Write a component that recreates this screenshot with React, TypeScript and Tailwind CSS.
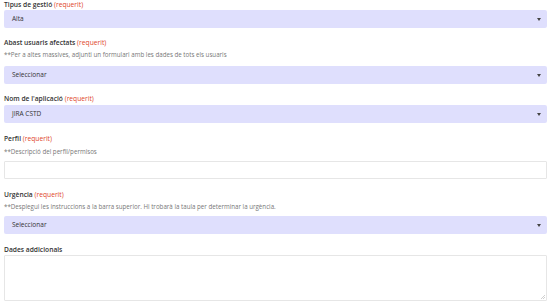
import React from "react";

const Req = () => <span className="font-normal text-[#e0451f]"> (requerit)</span>;

const Label = ({ children, req = true, className = "" }: { children: React.ReactNode; req?: boolean; className?: string }) => (
  <div className={`text-[6.7px] leading-[9px] font-semibold text-[#333] ${className}`}>
    {children}
    {req && <Req />}
  </div>
);

const Help = ({ children, className = "" }: { children: React.ReactNode; className?: string }) => (
  <div className={`text-[6.2px] leading-[8px] text-[#777] ${className}`}>{children}</div>
);

const Select = ({ value, className = "" }: { value: string; className?: string }) => (
  <div className={`h-[18px] rounded-[2px] bg-[#dfdffd] flex items-center justify-between pl-[8px] pr-[6px] ${className}`}>
    <span className="text-[6.5px] text-[#333]">{value}</span>
    <svg width="4" height="3" viewBox="0 0 4 3"><path d="M0 0 L4 0 L2 3 Z" fill="#444" /></svg>
  </div>
);

export default function App() {
  return (
    <div className="w-[551px] h-[305px] bg-white px-[4px] pt-[0px] overflow-hidden" style={{ fontFamily: '"Open Sans", sans-serif' }}>
      <Label>Tipus de gestió</Label>
      <Select value="Alta" className="mt-[1px]" />

      <Label className="mt-[10px]">Abast usuaris afectats</Label>
      <Help className="mt-[4px]">**Per a altes massives, adjunti un formulari amb les dades de tots els usuaris</Help>
      <Select value="Seleccionar" className="mt-[7px]" />

      <Label className="mt-[10px]">Nom de l'aplicació</Label>
      <Select value="JIRA CSTD" className="mt-[2px]" />

      <Label className="mt-[11px]">Perfil</Label>
      <Help className="mt-[5px]">**Descripció del perfil/permisos</Help>
      <div className="mt-[5px] h-[18px] border border-[#e6e6e6] rounded-[1px] bg-white" />

      <Label className="mt-[11px]">Urgència</Label>
      <Help className="mt-[4px]">**Desplegui les instruccions a la barra superior. Hi trobarà la taula per determinar la urgència.</Help>
      <Select value="Seleccionar" className="mt-[5px]" />

      <Label req={false} className="mt-[11px]">Dades addicionals</Label>
      <div className="relative mt-[1px] h-[46px] border border-[#e6e6e6] rounded-[1px] bg-white">
        <svg className="absolute right-[1px] bottom-[1px]" width="4" height="4" viewBox="0 0 4 4">
          <path d="M4 0 L0 4 M4 2 L2 4" stroke="#bbb" strokeWidth="0.7" />
        </svg>
      </div>
    </div>
  );
}
